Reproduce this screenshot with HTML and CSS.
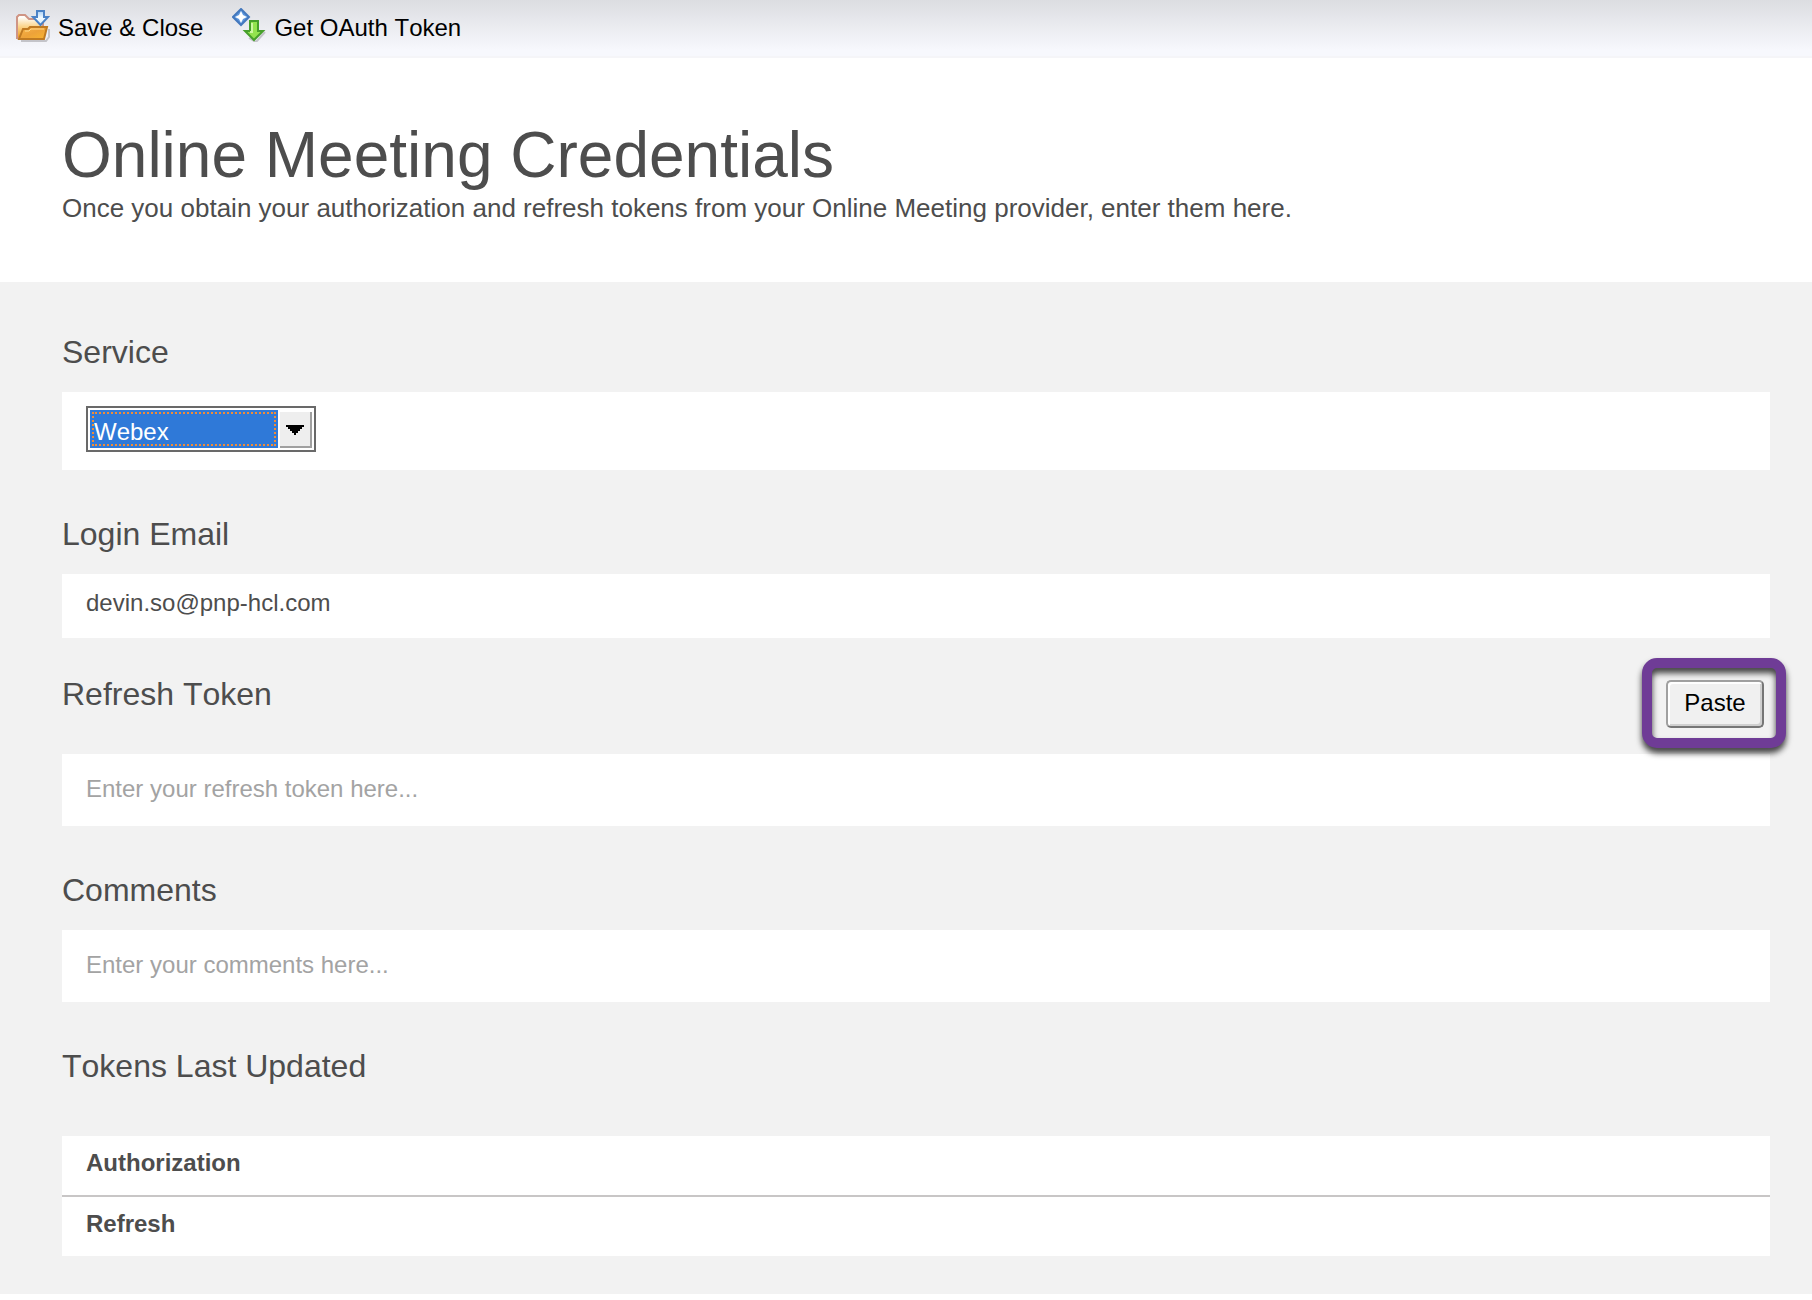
FILE: index.html
```html
<!DOCTYPE html>
<html lang="en">
<head>
<meta charset="utf-8">
<title>Online Meeting Credentials</title>
<link rel="stylesheet" href="styles.css">
</head>
<body>
<nav class="toolbar" aria-label="Actions">
  <button type="button" class="action">
    <svg class="icon" viewBox="0 0 34 34" aria-hidden="true">
      <defs>
        <linearGradient id="back" x1="0" y1="0" x2="0" y2="1"><stop offset="0.1" stop-color="#fffefa"/><stop offset="0.5" stop-color="#fbd58c"/><stop offset="1" stop-color="#f09a1c"/></linearGradient>
        <linearGradient id="front" x1="0" y1="0" x2="1" y2="1"><stop offset="0" stop-color="#f9b74c"/><stop offset="0.5" stop-color="#eda23a"/><stop offset="1" stop-color="#f8b530"/></linearGradient>
        <linearGradient id="down" x1="0" y1="0" x2="0" y2="1"><stop offset="0" stop-color="#a9cff5"/><stop offset="0.5" stop-color="#f4fbff"/><stop offset="1" stop-color="#cfe8fc"/></linearGradient>
      </defs>
      <path d="M5 33H30L33 29V21" fill="none" stroke="#c4c4c9" stroke-width="2"/>
      <path d="M1 30V9L3 7H9L13 11H27V30Z" fill="url(#back)" stroke="#cf9585" stroke-width="2"/>
      <path d="M3 31L7 21H12L14 19H31L28 31Z" fill="url(#front)" stroke="#bf7a22" stroke-width="2"/>
      <path d="M9 23H13L15 21H28" fill="none" stroke="#ffd98c" stroke-width="1"/>
      <path d="M21 3H28V9H32L24.500 17L17 9H21Z" fill="url(#down)" stroke="#4b82c6" stroke-width="2"/>
    </svg>
    <span>Save &amp; Close</span>
  </button>
  <button type="button" class="action">
    <svg class="icon" viewBox="0 0 34 34" aria-hidden="true">
      <path d="M17 30L24 34L33 24" fill="none" stroke="#c4c4c9" stroke-width="2"/>
      <path d="M9 1L17 9L9 17L1 9Z" fill="#5b95dc" stroke="#4478bd" stroke-width="2"/>
      <path d="M9 3L11 7L15 9L11 11L9 15L7 11L3 9L7 7Z" fill="#fff"/>
      <path d="M18 13H26V23H31L22 32L13 23H18Z" fill="#93e34f" stroke="#469f2b" stroke-width="2"/>
      <path d="M20 15V24H18" fill="none" stroke="#cdf7a3" stroke-width="2"/>
    </svg>
    <span>Get OAuth Token</span>
  </button>
</nav>

<header class="masthead">
  <h1 class="title">Online Meeting Credentials</h1>
  <p class="intro">Once you obtain your authorization and refresh tokens from your Online Meeting provider, enter them here.</p>
</header>

<main class="form">
  <section class="field">
    <label class="label" for="service">Service</label>
    <div class="panel">
      <div class="combo">
        <select id="service" class="combo-value"><option>Webex</option></select>
        <span class="combo-arrow" aria-hidden="true">
          <svg width="18" height="10" viewBox="0 0 18 10"><path d="M0 0H18V2H16V4H14V6H12V8H10V10H8V8H6V6H4V4H2V2H0Z"/></svg>
        </span>
      </div>
    </div>
  </section>

  <section class="field">
    <label class="label" for="email">Login Email</label>
    <input id="email" class="text text-email" type="email" value="devin.so@pnp-hcl.com">
  </section>

  <section class="field field-token">
    <div class="label-row">
      <label class="label" for="refresh">Refresh Token</label>
      <span class="highlight"><button type="button" class="paste">Paste</button></span>
    </div>
    <input id="refresh" class="text" type="text" placeholder="Enter your refresh token here...">
  </section>

  <section class="field">
    <label class="label" for="comments">Comments</label>
    <input id="comments" class="text" type="text" placeholder="Enter your comments here...">
  </section>

  <section class="field">
    <h2 class="label label-table" id="updated">Tokens Last Updated</h2>
    <table class="updates" aria-labelledby="updated">
      <tbody>
        <tr><th scope="row">Authorization</th><td></td></tr>
        <tr><th scope="row">Refresh</th><td></td></tr>
      </tbody>
    </table>
  </section>
</main>
</body>
</html>
```
FILE: styles.css
```css
* {
  box-sizing: border-box;
}

body {
  margin: 0;
  background: #fff;
  color: #4d4d4d;
  font: 24px/28px "Liberation Sans", Arial, sans-serif;
  font-kerning: none;
}

button,
input,
select {
  font: inherit;
  font-kerning: none;
  color: inherit;
  border-radius: 0;
}

.toolbar {
  display: flex;
  gap: 29px;
  height: 58px;
  padding: 8px 16px;
  background: linear-gradient(#dcdde1, #f7f8fd 90%);
  border-bottom: 2px solid #f5f5f8;
}

.action {
  display: flex;
  gap: 8px;
  padding: 0;
  border: 0;
  background: none;
  color: #000;
}

.action span {
  padding-top: 6px;
}

.icon {
  width: 34px;
  height: 34px;
}

.masthead {
  padding: 61px 62px 57px;
}

.title {
  margin: 0;
  font-size: 64px;
  line-height: 72px;
  font-weight: 400;
}

.intro {
  margin: 0;
  font-size: 26px;
  line-height: 34px;
  font-kerning: normal;
}

.form {
  display: flex;
  flex-direction: column;
  gap: 44px;
  padding: 50px 42px 38px 62px;
  background: #f2f2f2;
}

.field {
  display: flex;
  flex-direction: column;
}

.field-token {
  margin-top: -8px;
}

.label {
  margin: 0 0 20px;
  font-size: 32px;
  line-height: 40px;
  font-weight: 400;
}

.label-table {
  margin-bottom: 50px;
}

.label-row {
  display: flex;
  justify-content: space-between;
  height: 80px;
}

.panel {
  padding: 14px 24px 18px;
  background: #fff;
}

.combo {
  display: flex;
  gap: 2px;
  width: 230px;
  height: 46px;
  padding: 2px;
  border: 2px solid #696969;
  background: #fff;
}

.combo-value {
  appearance: none;
  width: 188px;
  padding: 6px 4px 0;
  border: 0;
  background: #2f79d8;
  color: #fff;
  outline: 2px dotted #f08c38;
  outline-offset: -4px;
}

.combo-arrow {
  display: flex;
  align-items: center;
  justify-content: center;
  width: 32px;
  margin-top: 2px;
  padding-top: 2px;
  border: solid #a0a0a0;
  border-width: 0 2px 2px 0;
  background: #eee;
}

.text {
  width: 100%;
  height: 72px;
  padding: 21px 24px 23px;
  border: 0;
  background: #fff;
}

.text::placeholder {
  color: #a3a3a3;
}

.text-email {
  height: 64px;
  padding: 15px 24px 21px;
}

.highlight {
  position: relative;
  align-self: flex-start;
  margin: 6px 6px 0 0;
}

.highlight::before {
  content: "";
  position: absolute;
  inset: -22px -22px -20px -24px;
  border: 10px solid #6f3c96;
  border-radius: 15px;
  filter: drop-shadow(0 5px 3px rgba(0, 0, 0, 0.75));
  pointer-events: none;
}

.paste {
  display: block;
  width: 98px;
  height: 48px;
  padding: 0 0 2px;
  border: 2px solid;
  border-color: #a0a0a0 #767676 #767676 #a0a0a0;
  border-radius: 5px;
  background: #f0f0f0;
  box-shadow: inset 2px 2px #fff, inset -2px -2px #d0d0d0;
  color: #000;
}

.updates {
  width: 100%;
  border-collapse: collapse;
  background: #fff;
}

.updates th {
  padding: 13px 24px 18px;
  text-align: left;
}

.updates tr + tr {
  border-top: 2px solid #c8c6c6;
}
```
